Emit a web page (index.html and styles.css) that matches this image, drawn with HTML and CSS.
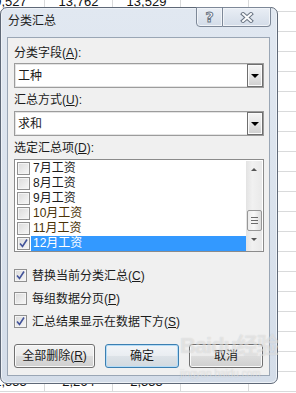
FILE: index.html
```html
<!DOCTYPE html>
<html lang="zh-CN">
<head>
    <meta charset="UTF-8">
    <title>分类汇总</title>
    <link rel="stylesheet" href="styles.css">
</head>
<body>

    <!-- Spreadsheet behind the dialog -->
    <div class="sheet">
        <div class="sheet-row"><div class="cell">9,527</div><div class="cell">13,762</div><div class="cell">13,529</div><div class="cell"></div><div class="cell last"></div></div>
        <div class="sheet-row"><div class="cell"></div><div class="cell"></div><div class="cell"></div><div class="cell"></div><div class="cell last"></div></div>
        <div class="sheet-row"><div class="cell"></div><div class="cell"></div><div class="cell"></div><div class="cell"></div><div class="cell last"></div></div>
        <div class="sheet-row"><div class="cell"></div><div class="cell"></div><div class="cell"></div><div class="cell"></div><div class="cell last"></div></div>
        <div class="sheet-row"><div class="cell"></div><div class="cell"></div><div class="cell"></div><div class="cell"></div><div class="cell last"></div></div>
        <div class="sheet-row"><div class="cell"></div><div class="cell"></div><div class="cell"></div><div class="cell"></div><div class="cell last"></div></div>
        <div class="sheet-row"><div class="cell"></div><div class="cell"></div><div class="cell"></div><div class="cell"></div><div class="cell last"></div></div>
        <div class="sheet-row"><div class="cell"></div><div class="cell"></div><div class="cell"></div><div class="cell"></div><div class="cell last"></div></div>
        <div class="sheet-row"><div class="cell"></div><div class="cell"></div><div class="cell"></div><div class="cell"></div><div class="cell last"></div></div>
        <div class="sheet-row"><div class="cell"></div><div class="cell"></div><div class="cell"></div><div class="cell"></div><div class="cell last"></div></div>
        <div class="sheet-row"><div class="cell"></div><div class="cell"></div><div class="cell"></div><div class="cell"></div><div class="cell last"></div></div>
        <div class="sheet-row"><div class="cell"></div><div class="cell"></div><div class="cell"></div><div class="cell"></div><div class="cell last"></div></div>
        <div class="sheet-row"><div class="cell"></div><div class="cell"></div><div class="cell"></div><div class="cell"></div><div class="cell last"></div></div>
        <div class="sheet-row"><div class="cell"></div><div class="cell"></div><div class="cell"></div><div class="cell"></div><div class="cell last"></div></div>
        <div class="sheet-row"><div class="cell"></div><div class="cell"></div><div class="cell"></div><div class="cell"></div><div class="cell last"></div></div>
        <div class="sheet-row"><div class="cell"></div><div class="cell"></div><div class="cell"></div><div class="cell"></div><div class="cell last"></div></div>
        <div class="sheet-row"><div class="cell"></div><div class="cell"></div><div class="cell"></div><div class="cell"></div><div class="cell last"></div></div>
        <div class="sheet-row"><div class="cell"></div><div class="cell"></div><div class="cell"></div><div class="cell"></div><div class="cell last"></div></div>
        <div class="sheet-row"><div class="cell"></div><div class="cell"></div><div class="cell"></div><div class="cell"></div><div class="cell last"></div></div>
        <div class="sheet-row"><div class="cell">1,555</div><div class="cell">2,264</div><div class="cell">2,555</div><div class="cell"></div><div class="cell last"></div></div>
    </div>

    <!-- Subtotal dialog -->
    <div class="dialog">
        <div class="titlebar">
            <span class="title">分类汇总</span>
            <div class="caption">
                <div class="cap-btn help"><span class="help-glyph">?</span></div>
                <div class="cap-btn close">
                    <svg width="14" height="11" viewBox="0 0 14 11">
                        <path d="M3 2 L11 9 M11 2 L3 9" stroke="#6a7584" stroke-width="4" stroke-linecap="square" fill="none"/>
                        <path d="M3 2 L11 9 M11 2 L3 9" stroke="#fafbfc" stroke-width="2" stroke-linecap="square" fill="none"/>
                    </svg>
                </div>
            </div>
        </div>

        <div class="client">
            <div class="field-label first">分类字段(<u>A</u>):</div>
            <div class="combo">
                <span class="combo-text">工种</span>
                <span class="drop-btn"><span class="tri-down"></span></span>
            </div>

            <div class="field-label">汇总方式(<u>U</u>):</div>
            <div class="combo combo-2">
                <span class="combo-text">求和</span>
                <span class="drop-btn"><span class="tri-down"></span></span>
            </div>

            <div class="field-label">选定汇总项(<u>D</u>):</div>
            <div class="list">
                <div class="items">
                    <div class="item"><span class="box"></span><span class="item-text">7月工资</span></div>
                    <div class="item"><span class="box"></span><span class="item-text">8月工资</span></div>
                    <div class="item"><span class="box"></span><span class="item-text">9月工资</span></div>
                    <div class="item"><span class="box"></span><span class="item-text brown">10月工资</span></div>
                    <div class="item"><span class="box"></span><span class="item-text brown">11月工资</span></div>
                    <div class="item"><span class="box checked">
                        <svg width="11" height="11" viewBox="0 0 11 11"><path d="M2 5.5 L4.5 8.5 L9 1.5" stroke="#42539a" stroke-width="1.6" fill="none"/></svg>
                    </span><span class="item-text selected">12月工资</span></div>
                </div>
                <div class="scrollbar">
                    <span class="arrow"><span class="tri-up"></span></span>
                    <span class="track"></span>
                    <span class="thumb"><span class="grip"></span><span class="grip"></span><span class="grip"></span></span>
                    <span class="arrow"><span class="tri-down small"></span></span>
                </div>
            </div>

            <div class="options">
                <div class="option"><span class="box checked">
                    <svg width="11" height="11" viewBox="0 0 11 11"><path d="M2 5.5 L4.5 8.5 L9 1.5" stroke="#42539a" stroke-width="1.6" fill="none"/></svg>
                </span><span>替换当前分类汇总(<u>C</u>)</span></div>
                <div class="option"><span class="box"></span><span>每组数据分页(<u>P</u>)</span></div>
                <div class="option"><span class="box checked">
                    <svg width="11" height="11" viewBox="0 0 11 11"><path d="M2 5.5 L4.5 8.5 L9 1.5" stroke="#42539a" stroke-width="1.6" fill="none"/></svg>
                </span><span>汇总结果显示在数据下方(<u>S</u>)</span></div>
            </div>

            <div class="buttons">
                <div class="btn wide"><span>全部删除(<u>R</u>)</span></div>
                <div class="btn default">确定</div>
                <div class="btn">取消</div>
            </div>
        </div>
    </div>

    <!-- Faint site watermark over the corner -->
    <div class="watermark">
        <div class="wm-big">Baidu经验</div>
        <div class="wm-small">jingyan.baidu.com</div>
    </div>

</body>
</html>
```

FILE: styles.css
```css
/* Page */
body {
    margin: 0;
    width: 296px;
    height: 393px;
    overflow: hidden;
    position: relative;
    background: #fff;
    font-family: "Liberation Sans", "Noto Sans CJK SC", sans-serif;
    font-size: 12px;
    color: #1b1b1b;
}

u {
    text-underline-offset: 1px;
}

/* Spreadsheet grid */
.sheet {
    margin: -8px 0 0 -23px;
    width: 319px;
}

.sheet-row {
    display: flex;
    height: 20px;
}

.cell {
    flex: 0 0 68px;
    box-sizing: border-box;
    height: 20px;
    border-right: 1px solid #d9dadb;
    border-bottom: 1px solid #d9dadb;
    text-align: center;
    line-height: 20px;
    font-size: 13px;
    color: #111;
}
.cell.last {
    flex: 1 1 auto;
    border-right: none;
}

/* Dialog window */
.dialog {
    position: absolute;
    left: 0;
    top: 7px;
    width: 278px;
    height: 377px;
    box-sizing: border-box;
    border: 1px solid #5e6877;
    border-radius: 7px;
    background: linear-gradient(#e1e8f1, #d4dde9);
    padding: 0 7px 7px 6px;
    display: flex;
    flex-direction: column;
    box-shadow: inset 0 0 0 1px #eef2f7;
}

.titlebar {
    height: 29px;
    display: flex;
    flex-shrink: 0;
}

.title {
    padding: 6px 0 0 1px;
    line-height: 14px;
    font-size: 12px;
    color: #1e1e1e;
}

/* Help and close buttons hanging from the top edge */
.caption {
    display: flex;
    margin: -1px -1px 0 auto;
    height: 20px;
}

.cap-btn {
    box-sizing: border-box;
    height: 20px;
    border: 1px solid #7d8898;
    background: linear-gradient(#e9eef5, #d3dce8);
    display: flex;
    align-items: center;
    justify-content: center;
    box-shadow: inset 0 0 0 1px #f1f4f8;
}

.help {
    width: 27px;
    border-radius: 0 0 0 4px;
}

.close {
    width: 48px;
    border-left: none;
    border-radius: 0 0 4px 0;
}

.help-glyph {
    font-family: "DejaVu Sans", sans-serif;
    font-weight: bold;
    font-size: 14px;
    line-height: 14px;
    color: #fafbfc;
    -webkit-text-stroke: 1px #6a7584;
}

/* Client area */
.client {
    flex: 1;
    background: #f0f0f0;
    border: 1px solid #9aa6b5;
    padding: 0 5px 0 6px;
    display: flex;
    flex-direction: column;
}

.field-label {
    line-height: 16px;
    margin-top: 4px;
}
.field-label.first {
    margin-top: 7px;
}

/* Combo boxes */
.combo {
    margin-top: 2px;
    height: 25px;
    box-sizing: border-box;
    border: 1px solid #9c9c9c;
    background: #fff;
    display: flex;
    align-items: center;
    box-shadow: inset 0 0 0 1px #e4e4e4;
}
.combo-2 {
    margin-top: 3px;
}

.combo-text {
    padding-left: 3px;
    line-height: 16px;
}

.drop-btn {
    margin-left: auto;
    width: 16px;
    height: 23px;
    box-sizing: border-box;
    border: 1px solid #6f6f6f;
    background: linear-gradient(#f6f6f6, #e6e6e6 50%, #cfcfcf);
    box-shadow: inset 0 0 0 1px #fbfbfb;
    display: flex;
    align-items: center;
    justify-content: center;
}

.tri-down {
    width: 0;
    height: 0;
    border-left: 4px solid transparent;
    border-right: 4px solid transparent;
    border-top: 4px solid #000;
}
.tri-down.small {
    border-left-width: 3.5px;
    border-right-width: 3.5px;
    border-top: 3px solid #555;
}

.tri-up {
    width: 0;
    height: 0;
    border-left: 3.5px solid transparent;
    border-right: 3.5px solid transparent;
    border-bottom: 3px solid #555;
}

/* List of fields to total */
.list {
    margin-top: 3px;
    height: 93px;
    box-sizing: border-box;
    border: 1px solid #8b8b8b;
    background: #fff;
    display: flex;
}

.items {
    width: 231px;
    padding-top: 1px;
}

.item {
    height: 15px;
    display: flex;
    align-items: center;
}

.box {
    flex: 0 0 13px;
    width: 13px;
    height: 13px;
    box-sizing: border-box;
    border: 1px solid #909090;
    background: linear-gradient(135deg, #dadada, #f7f7f7);
    box-shadow: inset 0 0 0 1px #f4f4f4;
    display: flex;
    align-items: center;
    justify-content: center;
}

.item .box {
    margin-left: 2px;
}

.item-text {
    flex: 1;
    height: 15px;
    line-height: 15px;
    margin-left: 1px;
    padding-left: 2px;
    font-size: 12px;
}
.item-text.brown {
    color: #4a3206;
}
.item-text.selected {
    background: #3399ff;
    color: #fff;
}

.scrollbar {
    width: 16px;
    margin: 1px 1px 0 0;
    background: linear-gradient(90deg, #e3e3e3, #f1f1f1 40%, #e9e9e9);
    display: flex;
    flex-direction: column;
    align-items: center;
}

.arrow {
    height: 16px;
    width: 16px;
    display: flex;
    align-items: center;
    justify-content: center;
}

.track {
    height: 33px;
}

.thumb {
    width: 15px;
    height: 21px;
    box-sizing: border-box;
    border: 1px solid #979797;
    border-radius: 2px;
    background: linear-gradient(90deg, #ececec, #f8f8f8 45%, #dcdcdc);
    display: flex;
    flex-direction: column;
    align-items: center;
    justify-content: center;
    gap: 2px;
}

.grip {
    width: 7px;
    height: 1px;
    background: #6b6b6b;
}

/* Check options */
.options {
    margin-top: 12px;
}

.option {
    height: 23px;
    display: flex;
    align-items: center;
    gap: 5px;
    line-height: 16px;
}

/* Command buttons */
.buttons {
    margin-top: 11px;
    display: flex;
    gap: 10px;
}

.btn {
    width: 74px;
    height: 24px;
    box-sizing: border-box;
    border: 1px solid #707070;
    border-radius: 3px;
    background: linear-gradient(#f2f2f2, #ebebeb 50%, #dddddd 50%, #cfcfcf);
    box-shadow: inset 0 0 0 1px #fafafa;
    display: flex;
    align-items: center;
    justify-content: center;
    line-height: 16px;
}
.btn.wide {
    width: 81px;
}
.btn.default {
    border-color: #3c7fb1;
    box-shadow: inset 0 0 0 1px #b4dcf7;
    background: linear-gradient(#f2f5f8, #e9edf1 50%, #dde3e8 50%, #d2d9df);
}

/* Watermark */
.watermark {
    position: absolute;
    left: 180px;
    top: 333px;
    color: rgba(255, 255, 255, 0.45);
    text-shadow: 0 0 1px rgba(90, 90, 90, 0.25);
    pointer-events: none;
}

.wm-big {
    font-size: 22px;
    font-weight: bold;
    line-height: 26px;
    letter-spacing: -1px;
}

.wm-small {
    font-size: 10px;
    line-height: 12px;
    margin-top: 9px;
}
```
